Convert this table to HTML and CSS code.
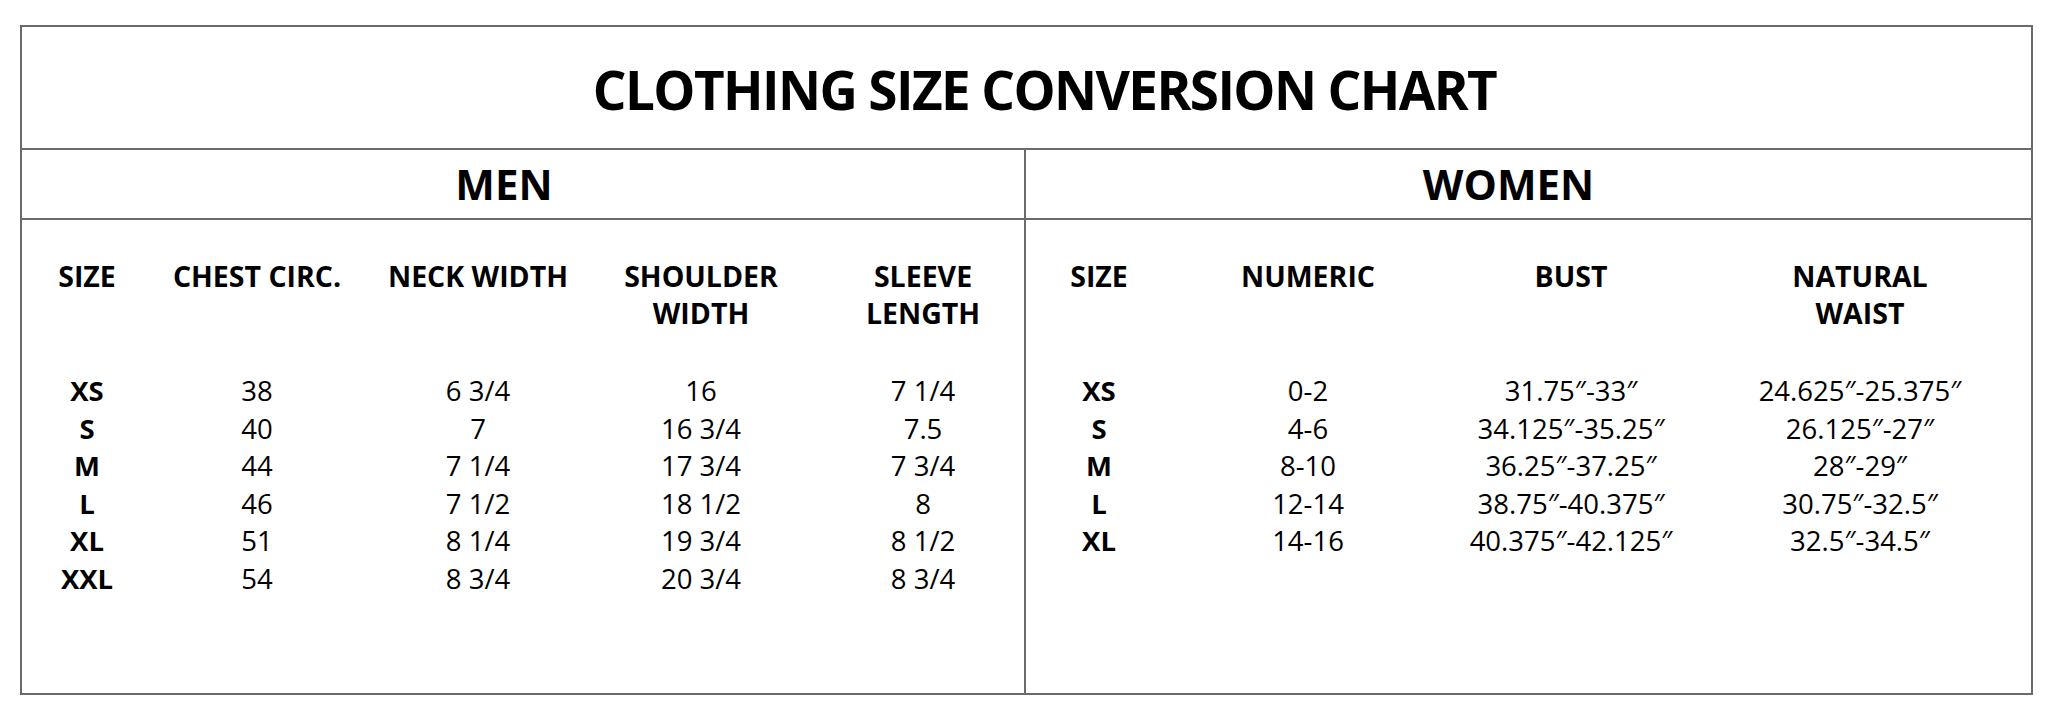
FILE: index.html
```html
<!DOCTYPE html>
<html lang="en">
<head>
<meta charset="utf-8">
<title>Clothing Size Conversion Chart</title>
<link rel="stylesheet" href="styles.css">
</head>
<body>
<div class="chart">
  <div class="title">CLOTHING SIZE CONVERSION CHART</div>
  <div class="panels">
    <section class="panel men">
      <div class="panel-head">MEN</div>
      <div class="grid men-grid">
        <div class="th">SIZE</div>
        <div class="th">CHEST CIRC.</div>
        <div class="th">NECK WIDTH</div>
        <div class="th">SHOULDER<br>WIDTH</div>
        <div class="th last">SLEEVE<br>LENGTH</div>

        <div class="sz">XS</div><div>38</div><div>6 3/4</div><div>16</div><div class="last">7 1/4</div>
        <div class="sz">S</div><div>40</div><div>7</div><div>16 3/4</div><div class="last">7.5</div>
        <div class="sz">M</div><div>44</div><div>7 1/4</div><div>17 3/4</div><div class="last">7 3/4</div>
        <div class="sz">L</div><div>46</div><div>7 1/2</div><div>18 1/2</div><div class="last">8</div>
        <div class="sz">XL</div><div>51</div><div>8 1/4</div><div>19 3/4</div><div class="last">8 1/2</div>
        <div class="sz">XXL</div><div>54</div><div>8 3/4</div><div>20 3/4</div><div class="last">8 3/4</div>
      </div>
    </section>
    <section class="panel women">
      <div class="panel-head">WOMEN</div>
      <div class="grid women-grid">
        <div class="th">SIZE</div>
        <div class="th">NUMERIC</div>
        <div class="th">BUST</div>
        <div class="th">NATURAL<br>WAIST</div>

        <div class="sz">XS</div><div>0-2</div><div>31.75″-33″</div><div>24.625″-25.375″</div>
        <div class="sz">S</div><div>4-6</div><div>34.125″-35.25″</div><div>26.125″-27″</div>
        <div class="sz">M</div><div>8-10</div><div>36.25″-37.25″</div><div>28″-29″</div>
        <div class="sz">L</div><div>12-14</div><div>38.75″-40.375″</div><div>30.75″-32.5″</div>
        <div class="sz">XL</div><div>14-16</div><div>40.375″-42.125″</div><div>32.5″-34.5″</div>
      </div>
    </section>
  </div>
</div>
</body>
</html>
```

FILE: styles.css
```css
* { box-sizing: border-box; }

html, body {
  margin: 0;
  padding: 0;
  background: #ffffff;
}

body {
  font-family: "Open Sans", "Liberation Sans", sans-serif;
  color: #000000;
}

.chart {
  margin: 25px 0 0 20px;
  width: 2013px;
  height: 670px;
  border: 2px solid #6a6a6a;
  display: flex;
  flex-direction: column;
}

.title {
  height: 123px;
  padding-top: 33px;
  padding-left: 36px;
  border-bottom: 2px solid #6a6a6a;
  text-align: center;
  font-weight: 700;
  font-size: 53px;
  line-height: 60px;
  letter-spacing: -1.6px;
}

.panels {
  flex: 1;
  display: grid;
  grid-template-columns: 1002px 1007px;
}

.women {
  border-left: 2px solid #6a6a6a;
}

.panel-head {
  height: 70px;
  border-bottom: 2px solid #6a6a6a;
  text-align: center;
  font-weight: 700;
  font-size: 42px;
  line-height: 68px;
}

.men .panel-head { padding-right: 38px; }
.women .panel-head { padding-right: 40px; }

.grid {
  display: grid;
  padding-top: 38px;
  text-align: center;
  font-size: 27.5px;
  line-height: 37.5px;
}

.men-grid {
  grid-template-columns: 130px 210px 232px 214px 216px;
}

.men-grid .last { padding-left: 14px; }

.women-grid {
  grid-template-columns: 146px 272px 254px 324px;
}

.th {
  font-weight: 700;
  font-size: 28.5px;
  line-height: 37px;
  padding-bottom: 40px;
}

.sz {
  font-weight: 700;
}
```
